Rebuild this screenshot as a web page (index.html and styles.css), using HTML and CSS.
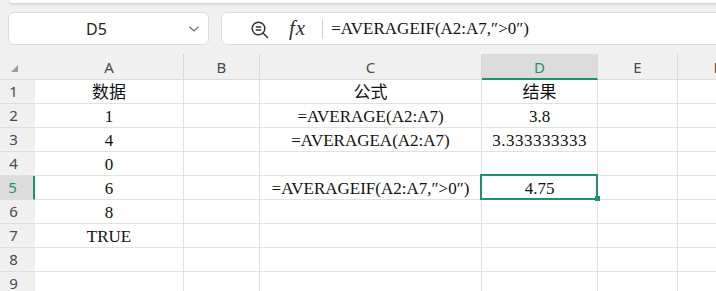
FILE: index.html
```html
<!DOCTYPE html>
<html lang="zh-CN">
<head>
    <meta charset="UTF-8">
    <title>AVERAGEIF</title>
    <link rel="stylesheet" href="styles.css">
</head>
<body>
<div class="topbar"></div>

<div class="formula-row">
    <div class="namebox">
        <span class="cellref">D5</span>
        <svg class="chevron" width="12" height="8" viewBox="0 0 12 8">
            <path d="M1.5 1.8 L6 6 L10.5 1.8" fill="none" stroke="#6a6a6a" stroke-width="1.2"/>
        </svg>
    </div>
    <div class="formulabox">
        <svg class="zoom" width="20" height="20" viewBox="0 0 20 20">
            <circle cx="8.5" cy="8.5" r="6.3" fill="none" stroke="#333" stroke-width="1.5"/>
            <path d="M5.8 7 H11.2 M5.8 10 H11.2" stroke="#333" stroke-width="1.4"/>
            <path d="M13.2 13.2 L17.5 17.5" stroke="#333" stroke-width="1.5" stroke-linecap="round"/>
        </svg>
        <span class="fx">fx</span>
        <span class="sep"></span>
        <span class="formula">=AVERAGEIF(A2:A7,″&gt;0″)</span>
    </div>
</div>

<div class="sheet">
    <!-- 列头 -->
    <div class="corner"><em></em></div>
    <div class="col-head">A</div>
    <div class="col-head">B</div>
    <div class="col-head">C</div>
    <div class="col-head active">D</div>
    <div class="col-head">E</div>
    <div class="col-head">F</div>

    <div class="row-head">1</div>
    <div class="cell">数据</div><div class="cell"></div><div class="cell">公式</div><div class="cell">结果</div><div class="cell"></div><div class="cell"></div>

    <div class="row-head">2</div>
    <div class="cell">1</div><div class="cell"></div><div class="cell">=AVERAGE(A2:A7)</div><div class="cell">3.8</div><div class="cell"></div><div class="cell"></div>

    <div class="row-head">3</div>
    <div class="cell">4</div><div class="cell"></div><div class="cell">=AVERAGEA(A2:A7)</div><div class="cell num">3.333333333</div><div class="cell"></div><div class="cell"></div>

    <div class="row-head">4</div>
    <div class="cell">0</div><div class="cell"></div><div class="cell"></div><div class="cell"></div><div class="cell"></div><div class="cell"></div>

    <div class="row-head active">5</div>
    <div class="cell">6</div><div class="cell"></div><div class="cell">=AVERAGEIF(A2:A7,″&gt;0″)</div><div class="cell selected">4.75</div><div class="cell"></div><div class="cell"></div>

    <div class="row-head">6</div>
    <div class="cell">8</div><div class="cell"></div><div class="cell"></div><div class="cell"></div><div class="cell"></div><div class="cell"></div>

    <div class="row-head">7</div>
    <div class="cell">TRUE</div><div class="cell"></div><div class="cell"></div><div class="cell"></div><div class="cell"></div><div class="cell"></div>

    <div class="row-head">8</div>
    <div class="cell"></div><div class="cell"></div><div class="cell"></div><div class="cell"></div><div class="cell"></div><div class="cell"></div>

    <div class="row-head">9</div>
    <div class="cell"></div><div class="cell"></div><div class="cell"></div><div class="cell"></div><div class="cell"></div><div class="cell"></div>
</div>
</body>
</html>
```

FILE: styles.css
```css
* {
    margin: 0;
    padding: 0;
    box-sizing: border-box;
}
body {
    width: 716px;
    height: 291px;
    overflow: hidden;
    background: #f0f0f0;
    font-family: "Noto Sans", "Open Sans", sans-serif;
    color: #222;
}

/* 上方工具栏的底边 */
.topbar {
    height: 3px;
    margin-left: 10px;
    margin-right: -20px;
    background: #fff;
    border-radius: 0 0 0 8px;
    box-shadow: 0 1px 3px rgba(0, 0, 0, .18);
}

.formula-row {
    display: flex;
    gap: 12px;
    height: 51px;
    padding: 9px 0 0 8px;
}
.namebox {
    flex: none;
    width: 201px;
    height: 33px;
    display: flex;
    align-items: center;
    background: #fff;
    border: 1px solid #dcdcdc;
    border-radius: 6px;
    padding: 0 8px 0 0;
}
.cellref {
    flex: 1;
    text-align: center;
    font-size: 16px;
    padding-right: 4px;
    color: #222;
}
.chevron {
    margin-top: 1px;
}
.formulabox {
    flex: none;
    width: 540px;
    height: 33px;
    display: flex;
    align-items: center;
    background: #fff;
    border: 1px solid #dcdcdc;
    border-radius: 6px;
    padding-left: 28px;
}
.zoom {
    margin-top: 2px;
}
.fx {
    margin-left: 19px;
    font-family: "Liberation Serif", serif;
    font-style: italic;
    font-size: 21px;
    color: #333;
    letter-spacing: 1px;
}
.sep {
    width: 1px;
    height: 20px;
    background: #cfcfcf;
    margin-left: 16px;
}
.formula {
    margin-left: 8px;
    font-family: "Liberation Serif", "Noto Sans CJK SC", serif;
    font-size: 17px;
    color: #111;
}

/* 表格区域 */
.sheet {
    display: grid;
    grid-template-columns: 35px 149px 76px 222px 116px 80px 80px;
    grid-template-rows: 26px repeat(9, 24px);
}
.corner {
    display: flex;
    align-items: flex-end;
    padding: 0 0 7px 11px;
    border-bottom: 1px solid #dcdcdc;
}
.corner em {
    width: 0;
    height: 0;
    border-left: 7px solid transparent;
    border-bottom: 7px solid #9c9c9c;
}
.col-head {
    text-align: center;
    font-size: 15px;
    line-height: 24px;
    padding-top: 1px;
    color: #4a4a4a;
    border-right: 1px solid #d8d8d8;
    border-bottom: 1px solid #dcdcdc;
}
.col-head.active {
    background: #dcdcdc;
    color: #1c9468;
    border-bottom: 2px solid #1c9468;
}
.row-head {
    text-align: center;
    padding-right: 8px;
    font-size: 15px;
    line-height: 23px;
    color: #4a4a4a;
    border-bottom: 1px solid #dedede;
}
.row-head.active {
    background: #dcdcdc;
    color: #1c9468;
    border-right: 2px solid #1c9468;
}
.cell {
    position: relative;
    background: #fff;
    border-right: 1px solid #e1e1e1;
    border-bottom: 1px solid #e1e1e1;
    text-align: center;
    white-space: nowrap;
    font-family: "Liberation Serif", "Noto Sans CJK SC", serif;
    font-size: 17px;
    line-height: 23px;
    padding-top: 1px;
    color: #111;
}
.cell.num {
    letter-spacing: 0.5px;
}
.cell.selected::after {
    content: "";
    position: absolute;
    left: -2px;
    top: -2px;
    right: -1px;
    bottom: -1px;
    border: 2px solid #1c9468;
}
.cell.selected::before {
    content: "";
    position: absolute;
    right: -3px;
    bottom: -2px;
    width: 5px;
    height: 5px;
    background: #1c9468;
    z-index: 1;
}
```
